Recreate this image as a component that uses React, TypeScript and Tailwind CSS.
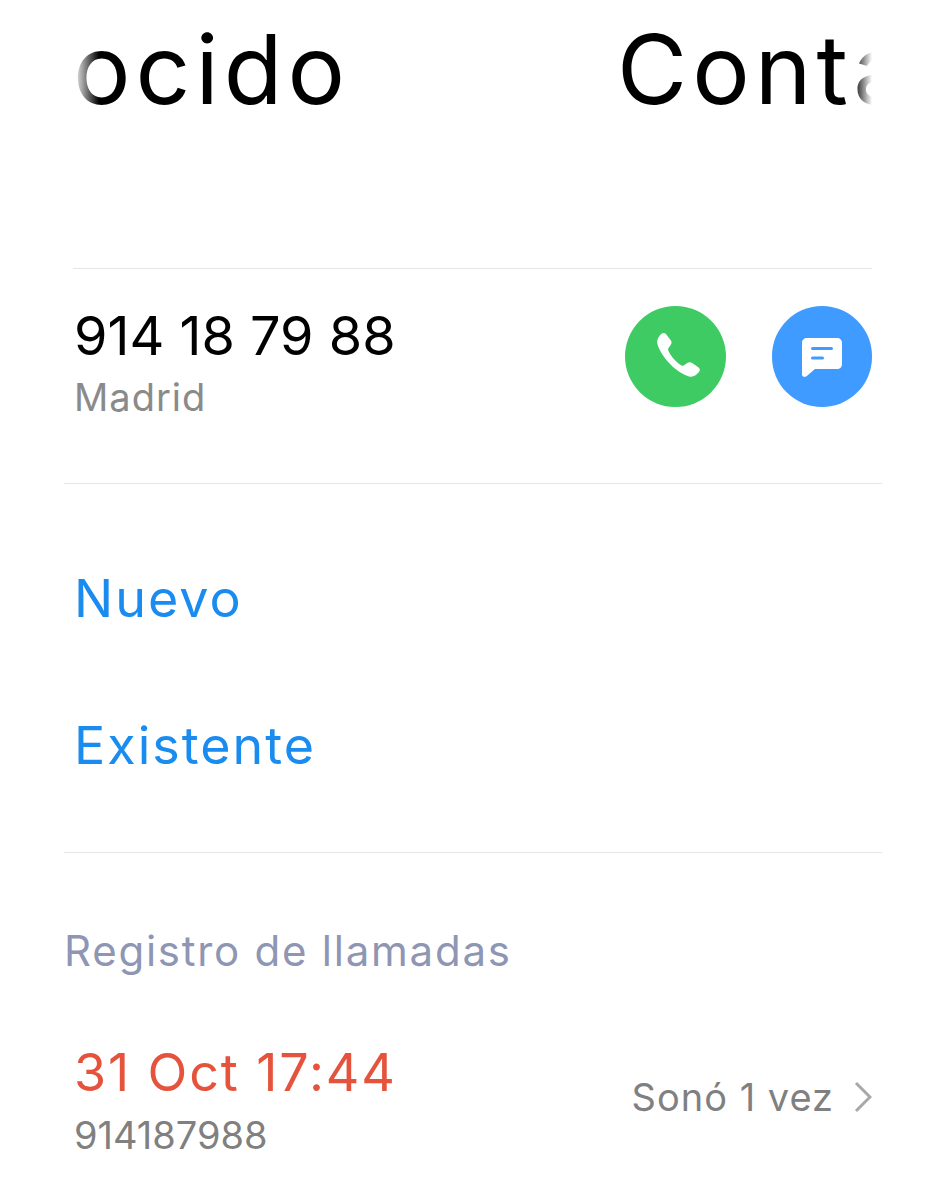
const font = "font-['Inter','Noto_Sans',sans-serif]";

function PhoneIcon() {
  return (
    <svg className="ml-[10px]" width="54" height="54" viewBox="0 0 50 50" fill="#fff">
      <path d="M7 3.500c1.300-1 3-1 4 .2l4.500 5.800c1 1.300 1 2.800.2 4l-2.400 3.500c-.4.6-.4 1.200-.1 1.900 2.500 5.500 7 10.600 12.300 14 .7.400 1.300.4 1.900 0l3.800-2.600c1.200-.8 2.600-.7 3.800.1l6.300 4.300c1.300 1 1.500 2.700.5 4-2 2.800-5.500 5.300-9.300 4.400C19 39 6.500 24 3.300 13.500 2.200 9.500 4 6 7 3.500z" />
    </svg>
  );
}

function MessageIcon() {
  return (
    <svg className="mt-[2px]" width="40" height="39" viewBox="0 0 40 39">
      <path d="M5 0h30c3 0 5 2 5 5v21c0 3-2 5-5 5H13l-8.500 7.200C2.500 39.700 0 38.500 0 36.500V5c0-3 2-5 5-5z" fill="#fff" />
      <rect x="9" y="9" width="22" height="3" rx="1.500" fill="#3f9bff" />
      <rect x="9" y="18.500" width="13" height="3" rx="1.500" fill="#3f9bff" />
    </svg>
  );
}

export default function App() {
  return (
    <div className={`${font} w-[946px] h-[1200px] overflow-hidden bg-white`}>
      {/* Tabs */}
      <div className="ml-[73px] mr-[74px] h-[269px] border-b border-[#e6e6e6]">
        <div className="flex h-[128px] overflow-hidden pt-[9px] text-[96px] leading-[120px] tracking-[5px] text-black [mask-image:linear-gradient(to_right,transparent_0,#000_26px,#000_780px,transparent_799px)]">
          <span className="-ml-[375px] shrink-0">Desconocido</span>
          <span className="ml-[267px] shrink-0">Contacto</span>
        </div>
      </div>

      {/* Number */}
      <div className="mx-16 flex h-[215px] items-start justify-between border-b border-[#e6e6e6] pl-[10px] pr-[10px] pt-[37px]">
        <div>
          <div className="text-[54px] leading-[60px] text-black">914 18 79 88</div>
          <div className="mt-[8px] text-[38px] leading-[46px] tracking-[1px] text-[#8a8a8a]">Madrid</div>
        </div>
        <div className="flex gap-[46px]">
          <div className="flex h-[101px] w-[101px] items-center justify-center rounded-full bg-[#3ecb63]">
            <PhoneIcon />
          </div>
          <div className="flex h-[101px] w-[100px] items-center justify-center rounded-full bg-[#3f9bff]">
            <MessageIcon />
          </div>
        </div>
      </div>

      {/* Add to contacts */}
      <div className="mx-16 flex h-[369px] flex-col border-b border-[#e6e6e6] pl-[10px] pt-[84px] text-[52px] leading-[62px] tracking-[2px] text-[#1a8cf0]">
        <div>Nuevo</div>
        <div className="mt-[85px]">Existente</div>
      </div>

      {/* Call log */}
      <div className="mx-16 pt-[72px]">
        <div className="text-[42px] leading-[52px] tracking-[1.750px] text-[#8f96b3]">Registro de llamadas</div>
        <div className="mt-[65px] flex items-start justify-between pl-[10px] pr-[10px]">
          <div>
            <div className="text-[52px] leading-[62px] tracking-[1.900px] text-[#e5533c]">31 Oct 17:44</div>
            <div className="mt-[8px] text-[38px] leading-[46px] text-[#808080]">914187988</div>
          </div>
          <div className="mt-[31px] flex items-center gap-[20px] text-[38px] leading-[48px] tracking-[1px] text-[#808080]">
            <span>Sonó 1 vez</span>
            <svg width="18" height="32" viewBox="0 0 18 32" fill="none" stroke="#a8a8a8" strokeWidth="3">
              <path d="M2 2l14 14L2 30" />
            </svg>
          </div>
        </div>
      </div>
    </div>
  );
}
